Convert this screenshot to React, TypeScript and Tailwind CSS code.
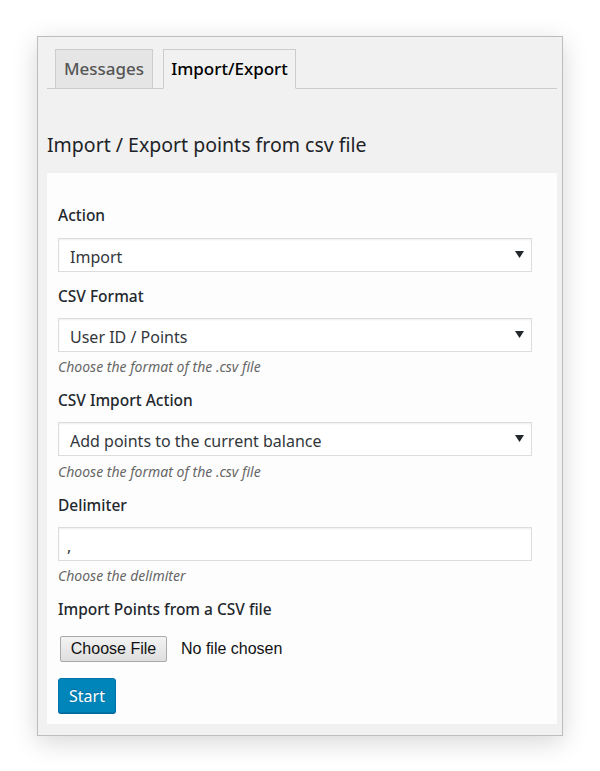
import { useState } from 'react';

const font = { fontFamily: '"Noto Sans", "Open Sans", sans-serif' };

function SelectBox({ value, options }: { value: string; options: string[] }) {
  const [val, setVal] = useState(value);
  return (
    <div className="relative w-[474px]">
      <select
        value={val}
        onChange={(e) => setVal(e.target.value)}
        className="appearance-none w-full h-[34px] pl-[11px] pr-8 pt-[3px] bg-white border border-[#dddddd] shadow-[inset_0_1px_2px_rgba(0,0,0,0.07)] text-[16px] text-[#32373c] outline-none"
        style={font}
      >
        {options.map((o) => (
          <option key={o}>{o}</option>
        ))}
      </select>
      {/* dropdown arrow */}
      <svg className="absolute right-[8px] top-[13px] pointer-events-none" width="9" height="7" viewBox="0 0 9 7">
        <path d="M0 0 H9 L4.5 7 Z" fill="#23282d" />
      </svg>
    </div>
  );
}

function Label({ children, className = '' }: { children: React.ReactNode; className?: string }) {
  return (
    <div className={`text-[15.5px] leading-[22px] font-medium text-[#23282d] ${className}`}>{children}</div>
  );
}

function Help({ children, className = '' }: { children: React.ReactNode; className?: string }) {
  return <p className={`text-[14px] leading-[20px] italic text-[#666] ${className}`}>{children}</p>;
}

export default function App() {
  const [tab, setTab] = useState('import');

  return (
    <div className="w-[600px] h-[771px] bg-white pt-[36px] pl-[37px]" style={font}>
      <div className="w-[526px] h-[700px] bg-[#f1f1f1] border border-[#bdbdbd] shadow-[0_6px_24px_rgba(0,0,0,0.16)] pl-[9px] pr-[5px] pt-[11px]">
        {/* Tabs */}
        <div className="flex items-end border-b border-[#cccccc] pl-[8px] h-[41px]">
          <button
            onClick={() => setTab('messages')}
            className={`h-[40px] w-[98px] border border-[#cccccc] text-[17px] font-medium -mb-px ${
              tab === 'messages' ? 'bg-[#f1f1f1] text-[#000] border-b-[#f1f1f1]' : 'bg-[#e5e5e5] text-[#555]'
            }`}
          >
            Messages
          </button>
          <button
            onClick={() => setTab('import')}
            className={`h-[40px] w-[133px] ml-[10px] border border-[#cccccc] text-[17px] font-medium -mb-px ${
              tab === 'import' ? 'bg-[#f1f1f1] text-[#000] border-b-[#f1f1f1]' : 'bg-[#e5e5e5] text-[#555]'
            }`}
          >
            Import/Export
          </button>
        </div>

        <h2 className="mt-[42px] text-[19.5px] leading-[28px] font-normal text-[#1d2327]">
          Import / Export points from csv file
        </h2>

        <div className="mt-[14px] bg-[#fdfdfd] h-[551px] pl-[11px] pt-[31px]">
          <Label>Action</Label>
          <div className="mt-[12px]">
            <SelectBox value="Import" options={['Import', 'Export']} />
          </div>

          <Label className="mt-[13px]">CSV Format</Label>
          <div className="mt-[11px]">
            <SelectBox value="User ID / Points" options={['User ID / Points', 'Email / Points', 'Username / Points']} />
          </div>
          <Help className="mt-[5px]">Choose the format of the .csv file</Help>

          <Label className="mt-[12px]">CSV Import Action</Label>
          <div className="mt-[11px]">
            <SelectBox
              value="Add points to the current balance"
              options={['Add points to the current balance', 'Replace the current balance']}
            />
          </div>
          <Help className="mt-[6px]">Choose the format of the .csv file</Help>

          <Label className="mt-[12px]">Delimiter</Label>
          <input
            defaultValue=","
            className="mt-[11px] w-[474px] h-[34px] pl-[8px] pt-[3px] bg-white border border-[#dddddd] shadow-[inset_0_1px_2px_rgba(0,0,0,0.07)] text-[16px] text-[#32373c] outline-none block"
            style={font}
          />
          <Help className="mt-[5px]">Choose the delimiter</Help>

          <Label className="mt-[12px]">Import Points from a CSV file</Label>
          <div
            className="mt-[16px] flex items-center ml-[2px]"
            style={{ fontFamily: '"Liberation Sans", Arial, sans-serif' }}
          >
            <button className="h-[26px] w-[107px] rounded-[2px] border border-[#a9a9a9] bg-gradient-to-b from-[#f3f3f3] to-[#dedede] text-[16px] text-[#111]">
              Choose File
            </button>
            <span className="ml-[14px] text-[16px] text-[#111]">No file chosen</span>
          </div>

          <button className="mt-[16px] h-[35px] w-[58px] rounded-[3px] border border-[#0073aa] bg-[#0085ba] shadow-[0_1px_0_#006799] text-white text-[16px] [text-shadow:0_-1px_1px_#006799]">
            Start
          </button>
        </div>
      </div>
    </div>
  );
}
